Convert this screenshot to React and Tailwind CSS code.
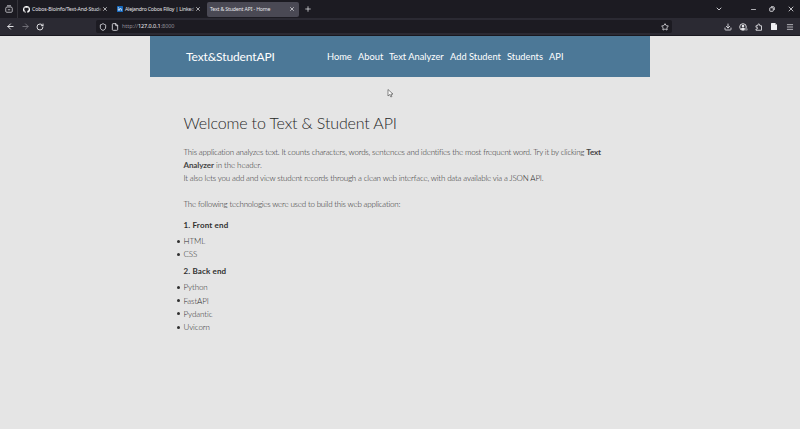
import {
  ArrowLeft, ArrowRight, RotateCw, Shield, File, Star, ChevronDown,
  Minus, X, Menu, Plus, Download,
} from "lucide-react";

const body = "text-[8px] font-light text-[#2c2c2c] whitespace-nowrap";

function Tab({ className, icon, title, titleClass, fade }) {
  return (
    <div className={`flex h-[15px] items-center rounded-[2px] ${className}`}>
      {icon}
      <div className={`relative min-w-0 flex-1 leading-[8px] whitespace-nowrap ${titleClass}`}>
        {title}
        {fade && <span className="absolute inset-y-0 right-0 w-[5px] bg-gradient-to-r from-transparent to-[#1c1b22]" />}
      </div>
      <X size={6} strokeWidth={2.8} className="shrink-0" />
    </div>
  );
}

function ContainerIcon() {
  return (
    <svg width="8" height="8" viewBox="0 0 16 16" fill="none" stroke="#c8c8ce" strokeWidth="1.7">
      <path d="M4 1.5h8M1.5 6.5l1.5-2.5h10l1.5 2.5v6a2 2 0 0 1-2 2h-9a2 2 0 0 1-2-2zM5.5 9.5h5" />
    </svg>
  );
}

function GithubMark() {
  return (
    <svg width="7" height="7" viewBox="0 0 16 16" fill="#fff" className="mr-[2px] shrink-0">
      <path d="M8 0a8 8 0 0 0-2.5 15.6c.4.1.5-.2.5-.4v-1.5c-2.2.5-2.7-1-2.7-1-.4-.9-.9-1.2-.9-1.2-.7-.5.1-.5.1-.5.8.1 1.2.8 1.2.8.7 1.3 1.9.9 2.3.7.1-.5.3-.9.5-1.1-1.8-.2-3.6-.9-3.6-4 0-.9.3-1.6.8-2.1-.1-.2-.4-1 .1-2.1 0 0 .7-.2 2.2.8a7.6 7.6 0 0 1 4 0c1.5-1 2.2-.8 2.2-.8.4 1.1.2 1.9.1 2.1.5.6.8 1.3.8 2.1 0 3.1-1.9 3.7-3.7 4 .3.2.6.7.6 1.5v2.3c0 .2.1.5.6.4A8 8 0 0 0 8 0z" />
    </svg>
  );
}

function LinkedinMark() {
  return (
    <svg width="6" height="6" viewBox="0 0 16 16" className="mr-[2px] shrink-0">
      <rect width="16" height="16" rx="1.5" fill="#1769bd" />
      <path d="M3.7 6.5v6M3.7 3v2M7.2 12.5v-6M7.2 9.5c0-3.5 5-3.5 5 0v3" stroke="#fff" strokeWidth="2" fill="none" />
    </svg>
  );
}

function AccountIcon() {
  return (
    <svg width="9" height="8" viewBox="0 0 18 16" className="mr-[7px]">
      <circle cx="8" cy="8" r="6.6" fill="none" stroke="#e6e6ea" strokeWidth="1.8" />
      <circle cx="8" cy="6" r="2.6" fill="#e6e6ea" />
      <path d="M3.5 12a4.8 4.8 0 0 1 9 0l-2 2h-5z" fill="#e6e6ea" />
      <circle cx="14.5" cy="12.5" r="3" fill="#77767e" />
    </svg>
  );
}

function ExtensionsIcon() {
  return (
    <svg width="8" height="8" viewBox="0 0 16 16" fill="none" stroke="#dcdce1" strokeWidth="1.8" strokeLinejoin="round" className="mr-[8px]">
      <path d="M2 5.5h3.5V4a2 2 0 0 1 4 0v1.5H13v9H2V12h1.5a1.7 1.7 0 0 0 0-3.4H2z" />
    </svg>
  );
}

function Browser() {
  return (
    <div className="font-['Noto_Sans',sans-serif] text-[#e6e6ea]">
      <div className="flex h-[18px] items-center bg-[#1c1b22] text-[5.2px]">
        <div className="flex h-[18px] w-[18px] items-center justify-center border-r border-[#35343b]">
          <ContainerIcon />
        </div>
        <Tab className="ml-px w-[92px] pr-[3px] pl-[4px]" icon={<GithubMark />} title="Cobos-Bioinfo/Text-And-Stude" titleClass="tracking-[-0.12px]" fade />
        <Tab className="ml-[2px] w-[92px] pr-[4px] pl-[4px]" icon={<LinkedinMark />} title="Alejandro Cobos Filloy | Linked" titleClass="tracking-[-0.2px]" fade />
        <Tab className="ml-[2px] w-[92px] bg-[#4a4954] pr-[4px] pl-[3px]" title="Text & Student API - Home" titleClass="tracking-[-0.16px]" />
        <Plus size={8} strokeWidth={2.2} className="ml-[5px]" />
        <div className="ml-auto flex items-center pr-[5px]">
          <ChevronDown size={8} strokeWidth={2.6} className="mr-[27px]" />
          <Minus size={7} strokeWidth={2.5} className="mr-[12px]" />
          <svg width="6" height="6" viewBox="0 0 12 12" fill="none" stroke="currentColor" strokeWidth="1.8" className="mr-[12px]">
            <rect x="1.5" y="3.5" width="7" height="7" rx="1" />
            <path d="M4 1.5h5a1.5 1.5 0 0 1 1.5 1.5v5" />
          </svg>
          <X size={8} strokeWidth={2.4} />
        </div>
      </div>
      <div className="flex h-[18px] items-center border-b border-[#19181f] bg-[#2b2a33]">
        <ArrowLeft size={9} strokeWidth={2.6} className="ml-[6px]" />
        <ArrowRight size={9} strokeWidth={2.4} className="ml-[6px] text-[#77767e]" />
        <RotateCw size={8} strokeWidth={2.8} className="ml-[6px]" />
        <div className="ml-[52px] flex h-[13px] w-[576px] items-center rounded-[2px] bg-[#1c1b22]">
          <Shield size={8} strokeWidth={2.5} className="ml-[3px]" />
          <File size={8} strokeWidth={2.5} className="ml-[4px]" />
          <span className="ml-[3px] text-[5.5px] tracking-[-0.06px] whitespace-nowrap text-[#8f8e96]">
            http://<span className="text-[#f0f0f4]">127.0.0.1</span>:8000
          </span>
          <Star size={8} strokeWidth={2.5} className="mr-[3px] ml-auto" />
        </div>
        <div className="ml-auto flex items-center pr-[6px]">
          <Download size={8} strokeWidth={2.6} className="mr-[7px]" />
          <AccountIcon />
          <ExtensionsIcon />
          <svg width="6" height="7" viewBox="0 0 12 14" className="mr-[9px]">
            <path d="M1 0h7l4 4v9a1 1 0 0 1-1 1H1a1 1 0 0 1-1-1V1a1 1 0 0 1 1-1z" fill="#efeff2" />
            <path d="M8 0v4h4" fill="#b5b5ba" />
          </svg>
          <Menu size={8} strokeWidth={2.2} />
        </div>
      </div>
    </div>
  );
}

function List({ items }) {
  return (
    <ul>
      {items.map((item) => (
        <li key={item} className={`-ml-[7px] flex h-[13.3px] items-center tracking-[-0.08px] ${body}`}>
          <span className="mr-[4px] h-[3px] w-[3px] rounded-full bg-[#303030]" />
          {item}
        </li>
      ))}
    </ul>
  );
}

export default function App() {
  return (
    <div className="h-[429px] w-[800px] overflow-hidden bg-[#e5e5e5]">
      <Browser />
      <div className="mx-auto w-[500px] font-[Lato,sans-serif]">
        <header className="flex h-[41px] items-center bg-[#4c7897] pl-[36px] whitespace-nowrap text-white">
          <div className="w-[141px] text-[12px] leading-[16px] tracking-[-0.12px]">Text&amp;StudentAPI</div>
          <nav className="flex text-[9.3px] leading-[14px]">
            <span className="w-[31px]">Home</span>
            <span className="w-[31px]">About</span>
            <span className="w-[61px]">Text Analyzer</span>
            <span className="w-[57px]">Add Student</span>
            <span className="w-[42px]">Students</span>
            <span>API</span>
          </nav>
        </header>
        <main className="pl-[33.5px]">
          <h1 className="mt-[35px] h-[22px] text-[16px] leading-[22px] font-light tracking-[-0.14px] whitespace-nowrap text-[#282828]">
            Welcome to Text &amp; Student API
          </h1>
          <div className={`mt-[11.7px] leading-[13.1px] ${body}`}>
            <p className="tracking-[-0.195px]">This application analyzes text. It counts characters, words, sentences and identifies the most frequent word. Try it by clicking <b className="font-bold text-[#444]">Text</b></p>
            <p className="tracking-[-0.1px]"><b className="font-bold text-[#444]">Analyzer</b> in the header.</p>
            <p className="tracking-[-0.18px]">It also lets you add and view student records through a clean web interface, with data available via a JSON API.</p>
            <p className="mt-[13.1px] tracking-[-0.21px]">The following technologies were used to build this web application:</p>
          </div>
          <h2 className="mt-[6.9px] h-[14px] text-[8px] leading-[14px] font-bold tracking-[0.17px] text-[#303030]">1. Front end</h2>
          <div className="mt-[2.5px]"><List items={["HTML", "CSS"]} /></div>
          <h2 className="mt-[3px] h-[14px] text-[8px] leading-[14px] font-bold tracking-[0.15px] text-[#303030]">2. Back end</h2>
          <div className="mt-[2.5px]"><List items={["Python", "FastAPI", "Pydantic", "Uvicorn"]} /></div>
        </main>
      </div>
      <svg width="7" height="9" viewBox="0 0 14 18" className="absolute top-[89px] left-[387px]">
        <path d="M2 1v13l3.4-3 2.3 5 2.2-1-2.3-4.8H12z" fill="#fff" stroke="#555" strokeWidth="1.4" />
      </svg>
    </div>
  );
}
